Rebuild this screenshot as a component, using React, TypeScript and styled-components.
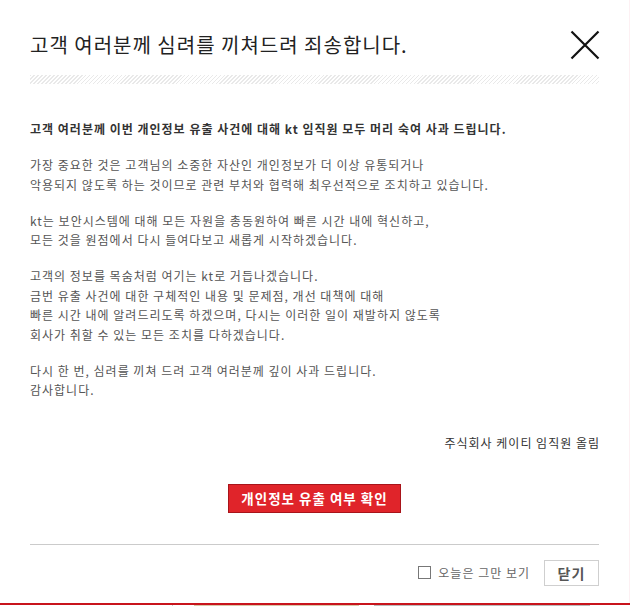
import React from "react";
import styled, { createGlobalStyle } from "styled-components";

const Global = createGlobalStyle`
  html, body { margin: 0; padding: 0; }
  body {
    background: #fdf0f3;
    font-family: "Noto Sans CJK KR", "Noto Sans", sans-serif;
    overflow: hidden;
  }
  * { box-sizing: border-box; }
`;

const Popup = styled.div`
  width: 629px;
  height: 603px;
  background: #fff;
  padding: 30px 30px 0 30px;
  display: flex;
  flex-direction: column;
`;

const Header = styled.div`
  display: flex;
  align-items: center;
  justify-content: space-between;
  height: 30px;
`;

const Title = styled.h1`
  margin: 0;
  font-size: 20px;
  font-weight: 400;
  line-height: 30px;
  color: #222;
  letter-spacing: 1px;
`;

const CloseButton = styled.button`
  width: 30px;
  height: 30px;
  padding: 0;
  border: 0;
  background: none;
  display: flex;
  align-items: center;
  justify-content: center;
  margin-right: -1px;
`;

const Hatch = styled.div`
  margin-top: 15px;
  height: 9px;
  background: repeating-linear-gradient(
    135deg,
    #e9e9e9 0 1.1px,
    #ffffff 1.1px 2.8px
  );
`;

const Body = styled.div`
  margin-top: 35px;
`;

const Para = styled.p<{ $bold?: boolean }>`
  margin: 0 0 16.5px 0;
  font-size: 12px;
  line-height: 19.5px;
  color: ${(p) => (p.$bold ? "#333" : "#555")};
  font-weight: ${(p) => (p.$bold ? 700 : 400)};
  letter-spacing: 1px;
`;

const Signature = styled.div`
  margin-top: 33px;
  text-align: right;
  font-size: 12px;
  line-height: 19.5px;
  color: #333;
  font-weight: 400;
  letter-spacing: 1px;
  margin-right: -1px;
`;

const CenterRow = styled.div`
  display: flex;
  justify-content: center;
  margin-top: 31.5px;
`;

const RedButton = styled.button`
  width: 173px;
  height: 29px;
  padding: 0;
  background: #e0242a;
  border: 1px solid #a8141a;
  color: #fff;
  font-family: inherit;
  font-size: 13.5px;
  font-weight: 700;
  line-height: 27px;
  letter-spacing: 1px;
  cursor: pointer;
`;

const Divider = styled.hr`
  margin: 31px 0 0 0;
  border: 0;
  border-top: 1px solid #cbcbcb;
  height: 0;
`;

const Footer = styled.div`
  margin-top: 15px;
  display: flex;
  justify-content: flex-end;
  align-items: center;
`;

const CheckLabel = styled.label`
  display: flex;
  align-items: center;
  gap: 7px;
  font-size: 12px;
  color: #666;
  letter-spacing: 1px;
  margin-right: 14px;
`;

const Box = styled.span`
  width: 13px;
  height: 13px;
  border: 1px solid #777;
  background: #fff;
  display: inline-block;
`;

const CloseText = styled.button`
  width: 55px;
  height: 26px;
  padding: 0;
  background: #fff;
  border: 1px solid #cfcfcf;
  color: #555;
  font-family: inherit;
  font-size: 14px;
  font-weight: 700;
  line-height: 24px;
  letter-spacing: 1px;
`;

const PageBehind = styled.div`
  border-top: 2px solid #c8141c;
  height: 20px;
  display: flex;
  align-items: flex-start;
  background: #fff;
`;

const Thumb = styled.div<{ $w: number; $ml: number; $c: string }>`
  width: ${(p) => p.$w}px;
  margin-left: ${(p) => p.$ml}px;
  height: 2px;
  background: ${(p) => p.$c};
`;

export default function App() {
  return (
    <>
      <Global />
      <Popup>
        <Header>
          <Title>고객 여러분께 심려를 끼쳐드려 죄송합니다.</Title>
          <CloseButton aria-label="닫기">
            <svg width="30" height="30" viewBox="0 0 30 30">
              <path d="M1.5 1.5 L28.5 28.5 M28.5 1.5 L1.5 28.5" stroke="#111" strokeWidth="2.2" fill="none" />
            </svg>
          </CloseButton>
        </Header>
        <Hatch />
        <Body>
          <Para $bold>고객 여러분께 이번 개인정보 유출 사건에 대해 kt 임직원 모두 머리 숙여 사과 드립니다.</Para>
          <Para>
            가장 중요한 것은 고객님의 소중한 자산인 개인정보가 더 이상 유통되거나
            <br />
            악용되지 않도록 하는 것이므로 관련 부처와 협력해 최우선적으로 조치하고 있습니다.
          </Para>
          <Para>
            kt는 보안시스템에 대해 모든 자원을 총동원하여 빠른 시간 내에 혁신하고,
            <br />
            모든 것을 원점에서 다시 들여다보고 새롭게 시작하겠습니다.
          </Para>
          <Para>
            고객의 정보를 목숨처럼 여기는 kt로 거듭나겠습니다.
            <br />
            금번 유출 사건에 대한 구체적인 내용 및 문제점, 개선 대책에 대해
            <br />
            빠른 시간 내에 알려드리도록 하겠으며, 다시는 이러한 일이 재발하지 않도록
            <br />
            회사가 취할 수 있는 모든 조치를 다하겠습니다.
          </Para>
          <Para>
            다시 한 번, 심려를 끼쳐 드려 고객 여러분께 깊이 사과 드립니다.
            <br />
            감사합니다.
          </Para>
          <Signature>주식회사 케이티 임직원 올림</Signature>
        </Body>
        <CenterRow>
          <RedButton>개인정보 유출 여부 확인</RedButton>
        </CenterRow>
        <Divider />
        <Footer>
          <CheckLabel>
            <Box />
            오늘은 그만 보기
          </CheckLabel>
          <CloseText>닫기</CloseText>
        </Footer>
      </Popup>
      <PageBehind>
        <Thumb $w={1} $ml={172} $c="#ccc" />
        <Thumb $w={165} $ml={21} $c="#d9c7a8" />
        <Thumb $w={216} $ml={15} $c="#bbb" />
      </PageBehind>
    </>
  );
}
